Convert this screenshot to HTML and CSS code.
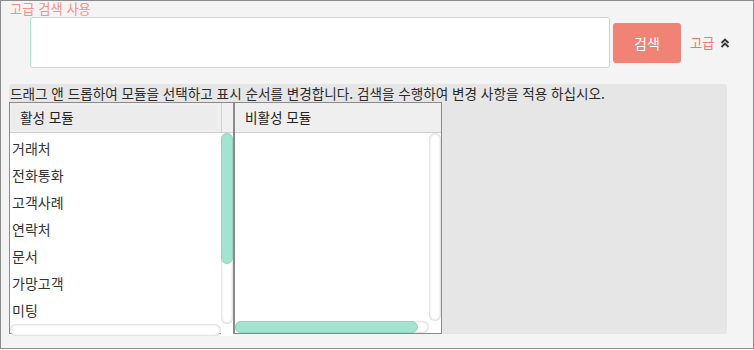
FILE: index.html
```html
<!DOCTYPE html>
<html lang="ko">
<head>
<meta charset="utf-8">
<link rel="stylesheet" href="styles.css">
</head>
<body>
<div class="frame">
  <div class="adv-label">고급 검색 사용</div>
  <div class="search-row">
    <textarea class="search-box"></textarea>
    <button class="search-btn">검색</button>
    <a class="adv-link">고급</a>
    <svg class="chev" width="10" height="10" viewBox="0 0 10 10"><polyline points="1.5,5 5,1.5 8.5,5" fill="none" stroke="#333" stroke-width="1.8"/><polyline points="1.5,9 5,5.5 8.5,9" fill="none" stroke="#333" stroke-width="1.8"/></svg>
  </div>
  <div class="panel">
    <div class="hint">드래그 앤 드롭하여 모듈을 선택하고 표시 순서를 변경합니다. 검색을 수행하여 변경 사항을 적용 하십시오.</div>
    <div class="lists">
      <div class="listbox left">
        <div class="head"><span class="head-cell">활성 모듈</span><span class="head-gap"></span></div>
        <div class="body">
          <ul class="items">
            <li>거래처</li>
            <li>전화통화</li>
            <li>고객사례</li>
            <li>연락처</li>
            <li>문서</li>
            <li>가망고객</li>
            <li>미팅</li>
          </ul>
          <div class="vscroll"><div class="vthumb"></div></div>
          <div class="hscroll"></div>
          <div class="corner"></div>
        </div>
      </div>
      <div class="listbox right">
        <div class="head"><span class="head-cell">비활성 모듈</span></div>
        <div class="body">
          <div class="items"></div>
          <div class="vscroll"></div>
          <div class="hscroll"><div class="hthumb"></div></div>
          <div class="corner"></div>
        </div>
      </div>
    </div>
  </div>
</div>
</body>
</html>
```

FILE: styles.css
```css
* { box-sizing: border-box; }
html, body { margin: 0; padding: 0; background: #ffffff; }
body { font-family: "Noto Sans CJK KR", "Noto Sans", sans-serif; color: #333; }

.frame {
  width: 754px;
  height: 349px;
  border: 1px solid #8c8c8c;
  background: #f4f4f4;
}

.adv-label {
  height: 16px;
  line-height: 16px;
  font-size: 13.3px;
  color: #f5918a;
  padding-left: 9px;
}

.search-row {
  display: flex;
  align-items: flex-start;
  height: 51px;
}

.search-box {
  margin: 0 0 0 29px;
  width: 580px;
  height: 51px;
  border: 1px solid #a8e8d6;
  border-radius: 3px;
  background: #fff;
  resize: none;
  padding: 4px;
  outline: none;
}

.search-btn {
  margin: 6px 0 0 3px;
  width: 68px;
  height: 40px;
  border: none;
  border-radius: 3px;
  background: #f08376;
  color: #fff;
  font-family: inherit;
  font-size: 14px;
  padding: 0;
}

.adv-link {
  margin: 18px 0 0 9px;
  font-size: 13.3px;
  line-height: 16px;
  color: #ee7a6f;
}

.chev {
  margin: 21px 0 0 6px;
}

.panel {
  margin: 16px 0 0 8px;
  width: 718px;
  height: 250px;
  background: #e6e6e6;
  border-radius: 3px;
}

.hint {
  height: 18px;
  line-height: 18px;
  font-size: 13.6px;
  color: #2a2a2a;
  padding-left: 1px;
  white-space: nowrap;
}

.lists {
  display: flex;
}

.listbox {
  height: 232px;
  border: 1px solid #8a8a8a;
  background: #fff;
  display: flex;
  flex-direction: column;
}
.listbox.left { width: 225px; }
.listbox.right { width: 208px; }

.head {
  height: 30px;
  background: #efefef;
  border-bottom: 1px solid #cfcfcf;
  display: flex;
  flex: none;
}
.head-cell {
  flex: 1;
  padding-left: 10px;
  line-height: 29px;
  font-size: 13.6px;
  color: #222;
}
.left .head-cell { margin: 2px 4px 2px 2px; line-height: 25px; padding-left: 8px; background: #ececec; }
.head-gap {
  width: 12px;
  border-left: 1px solid #cfcfcf;
  background: #f0f0f0;
}

.body {
  flex: 1;
  display: grid;
  grid-template-columns: 1fr 12px;
  grid-template-rows: 1fr 12px;
}

.items {
  list-style: none;
  margin: 0;
  padding: 2px 0 0 2px;
  overflow: hidden;
  font-size: 14px;
}
.items li {
  height: 27px;
  line-height: 27px;
  color: #333;
}

.vscroll {
  border-radius: 6px;
  background: #fff;
  box-shadow: inset 0 0 3px rgba(0,0,0,0.28);
}
.vthumb {
  height: 131px;
  border-radius: 6px;
  background: #a3e4d1;
  border: 1px solid #90d6c1;
}

.hscroll {
  border-radius: 6px;
  background: #fff;
  box-shadow: inset 0 0 3px rgba(0,0,0,0.28);
}
.hthumb {
  width: 183px;
  height: 12px;
  border-radius: 6px;
  background: #a3e4d1;
  border: 1px solid #90d6c1;
}
.corner { background: #fff; }
```
